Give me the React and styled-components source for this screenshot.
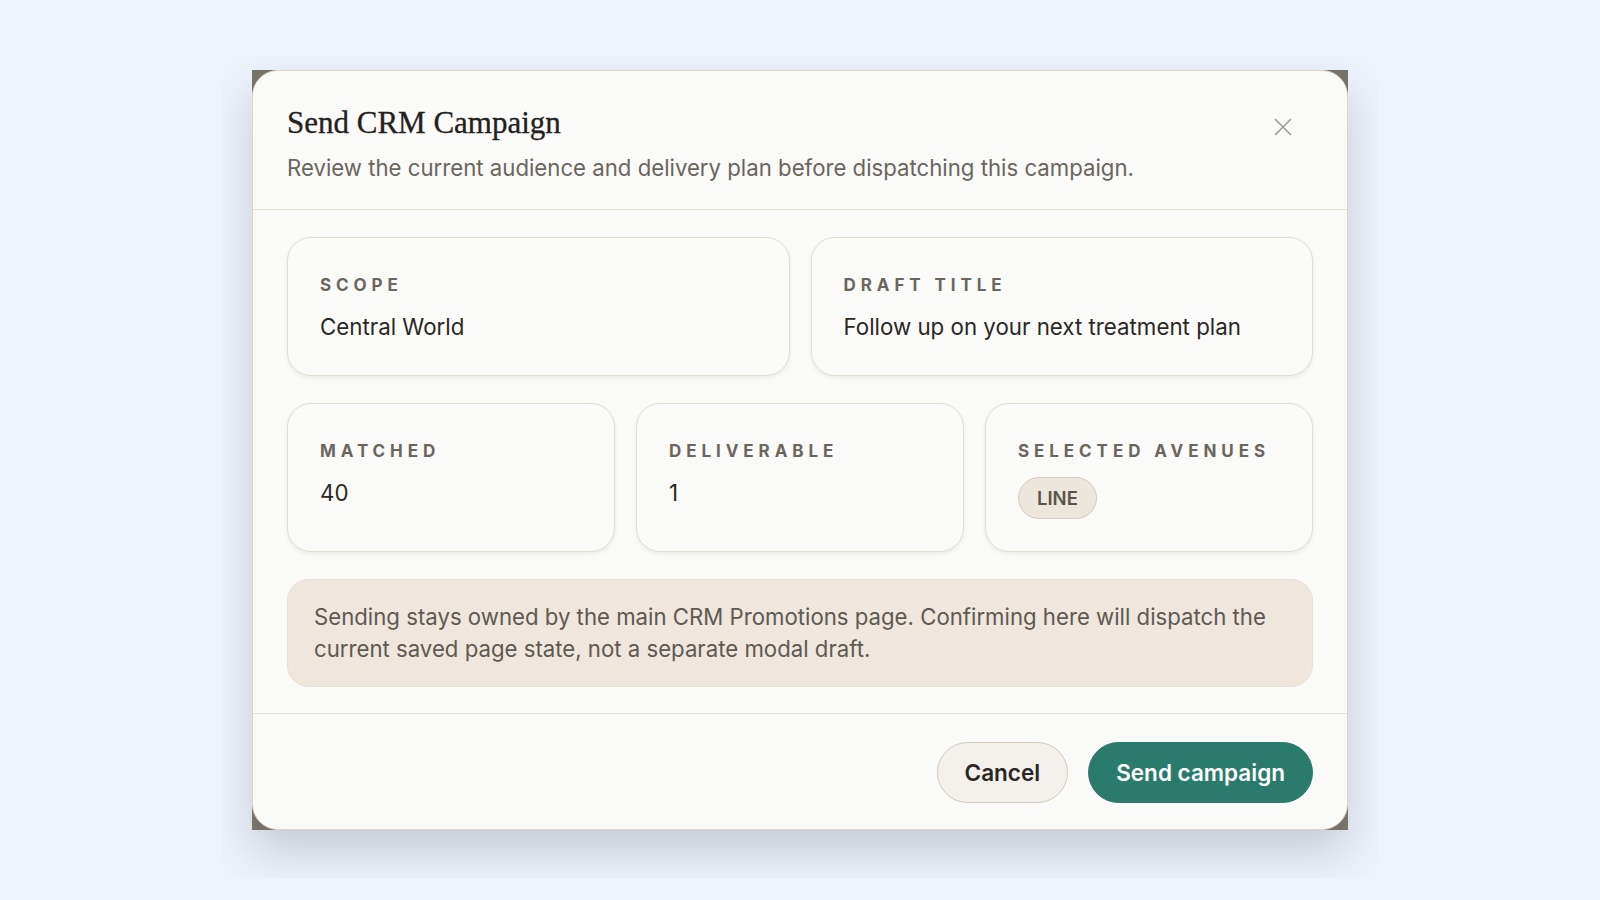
import React from 'react';
import styled, { createGlobalStyle } from 'styled-components';

const GlobalStyle = createGlobalStyle`
  html, body {
    margin: 0;
    padding: 0;
    background: #eff3fc;
  }
  * {
    box-sizing: border-box;
  }
`;

const Stage = styled.div`
  min-height: 100vh;
  display: flex;
  align-items: center;
  justify-content: center;
  font-family: Inter, "Noto Sans", "Liberation Sans", sans-serif;
`;

const ShadowClip = styled.div`
  overflow: hidden;
  padding: 14px 30px 48px;
  margin-top: 34px;
`;

const Frame = styled.div`
  width: 1096px;
  background: #77736b;
  box-shadow: 0 22px 44px rgba(52, 60, 78, 0.22);
`;

const Panel = styled.div`
  background: #fafaf8;
  border: 1px solid #ddd5c8;
  border-radius: 26px;
  overflow: hidden;
`;

const Header = styled.header`
  display: flex;
  align-items: flex-start;
  justify-content: space-between;
  padding: 33px 44px 26px 34px;
  border-bottom: 1px solid #e6e0d6;
`;

const Title = styled.h2`
  margin: 0;
  font-family: "Liberation Serif", "DejaVu Serif", serif;
  font-size: 31px;
  line-height: 1.2;
  font-weight: 400;
  color: #24211d;
  -webkit-text-stroke: 0.3px #24211d;
`;

const Subtitle = styled.p`
  margin: 12px 0 0;
  font-size: 22.2px;
  line-height: 30px;
  color: #6a655d;
`;

const CloseButton = styled.button`
  width: 40px;
  height: 40px;
  margin-top: 3px;
  padding: 0;
  border: 0;
  background: transparent;
  display: flex;
  align-items: center;
  justify-content: center;
  color: #a19b91;
  cursor: pointer;
`;

const Body = styled.div`
  padding: 27px 34px 26px;
  display: flex;
  flex-direction: column;
  gap: 27px;
`;

const Row = styled.div`
  display: grid;
  grid-template-columns: repeat(${(p) => p.$cols}, 1fr);
  gap: 21px;
`;

const Card = styled.div`
  background: #fafaf8;
  border: 1px solid #e3dcd0;
  border-radius: 24px;
  box-shadow: 0 2px 4px rgba(90, 70, 40, 0.08);
  padding: 37px 32px 32px;
  display: flex;
  flex-direction: column;
  align-items: flex-start;
  gap: 16px;
`;

const Label = styled.div`
  font-size: 17px;
  line-height: 20px;
  font-weight: 700;
  letter-spacing: 0.29em;
  text-transform: uppercase;
  color: #6b665d;
`;

const Value = styled.div`
  font-size: 22.3px;
  line-height: 32px;
  color: #2b2824;
`;

const Pill = styled.span`
  display: inline-flex;
  align-items: center;
  height: 42px;
  padding: 0 18px;
  border-radius: 999px;
  border: 1px solid #d5cbbd;
  background: #ede6dc;
  font-size: 18.5px;
  font-weight: 600;
  color: #5a544c;
`;

const Notice = styled.div`
  background: #efe7dd;
  border: 1px solid #e8dfd2;
  border-radius: 22px;
  padding: 21px 26px;
  font-size: 22.2px;
  line-height: 32px;
  color: #5e5952;
`;

const Footer = styled.footer`
  display: flex;
  justify-content: flex-end;
  gap: 20px;
  padding: 28px 34px 26px;
  border-top: 1px solid #e6e0d6;
`;

const Button = styled.button`
  height: 61px;
  padding: 0 27px;
  border-radius: 999px;
  font-family: inherit;
  font-size: 22.5px;
  font-weight: 600;
  cursor: pointer;
  border: 1px solid ${(p) => (p.$primary ? '#2b7b6d' : '#d2c9bb')};
  background: ${(p) => (p.$primary ? '#2b7b6d' : '#f4f1ec')};
  color: ${(p) => (p.$primary ? '#ffffff' : '#2a2724')};
`;

const CloseIcon = () => (
  <svg width="18" height="18" viewBox="0 0 18 18" fill="none">
    <path d="M1.5 1.5 L16.5 16.5 M16.5 1.5 L1.5 16.5" stroke="currentColor" strokeWidth="1.6" strokeLinecap="round" />
  </svg>
);

const App = () => {
  return (
    <Stage>
      <GlobalStyle />
      <ShadowClip>
        <Frame>
          <Panel>
            <Header>
              <div>
                <Title>Send CRM Campaign</Title>
                <Subtitle>Review the current audience and delivery plan before dispatching this campaign.</Subtitle>
              </div>
              <CloseButton aria-label="Close">
                <CloseIcon />
              </CloseButton>
            </Header>

            <Body>
              <Row $cols={2}>
                <Card>
                  <Label>Scope</Label>
                  <Value>Central World</Value>
                </Card>
                <Card>
                  <Label>Draft title</Label>
                  <Value>Follow up on your next treatment plan</Value>
                </Card>
              </Row>

              <Row $cols={3}>
                <Card>
                  <Label>Matched</Label>
                  <Value>40</Value>
                </Card>
                <Card>
                  <Label>Deliverable</Label>
                  <Value>1</Value>
                </Card>
                <Card>
                  <Label>Selected avenues</Label>
                  <Pill>LINE</Pill>
                </Card>
              </Row>

              <Notice>
                Sending stays owned by the main CRM Promotions page. Confirming here will dispatch the current saved page state, not a separate modal draft.
              </Notice>
            </Body>

            <Footer>
              <Button>Cancel</Button>
              <Button $primary>Send campaign</Button>
            </Footer>
          </Panel>
        </Frame>
      </ShadowClip>
    </Stage>
  );
};

export default App;
